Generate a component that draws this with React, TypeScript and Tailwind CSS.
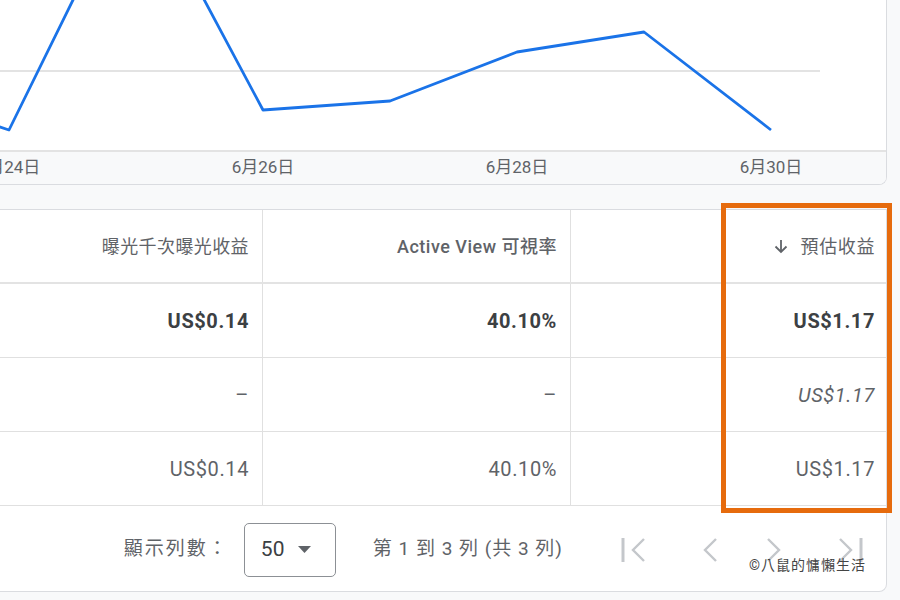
import React from 'react';

const FONT = "font-['Roboto','Noto_Sans_CJK_TC',sans-serif]";

// one point per day, 6/23 .. 6/30, spacing 127px
const points = [88, 130, -128, 110, 101, 52, 32, 130];
const dayLabels = ['6月24日', '6月26日', '6月28日', '6月30日'];

const linePath = points.map((y, i) => `${i === 0 ? 'M' : 'L'}${i * 127 - 118} ${y}`).join(' ');

type Row = { cpm: string; view: string; revenue: string; kind: 'total' | 'avg' | 'plain' };

const rows: Row[] = [
  { cpm: 'US$0.14', view: '40.10%', revenue: 'US$1.17', kind: 'total' },
  { cpm: '–', view: '–', revenue: 'US$1.17', kind: 'avg' },
  { cpm: 'US$0.14', view: '40.10%', revenue: 'US$1.17', kind: 'plain' },
];

const Chevron = ({ dir, bar }: { dir: 'left' | 'right'; bar?: boolean }) => (
  <svg width="26" height="28" viewBox="0 0 26 28" fill="none" stroke="#c4c7cb" strokeWidth="2.4">
    {dir === 'left' ? (
      <>
        {bar && <line x1="2" y1="2" x2="2" y2="26" strokeWidth="3" />}
        <polyline points="23,3 12,14 23,25" />
      </>
    ) : (
      <>
        <polyline points="3,3 14,14 3,25" />
        {bar && <line x1="24" y1="2" x2="24" y2="26" strokeWidth="3" />}
      </>
    )}
  </svg>
);

function Chart() {
  return (
    <div className="w-[887px] bg-white border-r border-b border-[#dadce0] rounded-br-lg overflow-hidden">
      <div className="h-[150px] relative">
        <svg width="886" height="150" className="block">
          <line x1="0" y1="71" x2="820" y2="71" stroke="#e3e3e3" strokeWidth="2" />
          <path d={linePath} fill="none" stroke="#1a73e8" strokeWidth="2.8" strokeLinejoin="round" />
        </svg>
      </div>
      <div className="h-[34px] relative border-t-2 border-[#e3e3e3] bg-[#f8f9fa]">
        {dayLabels.map((label, i) => (
          <span
            key={label}
            className="absolute top-[3px] -translate-x-1/2 text-[17px] text-[#5f6368] whitespace-nowrap"
            style={{ left: 9 + i * 254 }}
          >
            {label}
          </span>
        ))}
      </div>
    </div>
  );
}

function Table() {
  const cell = 'flex items-center justify-end pr-[13px] border-r border-[#e0e0e0]';
  return (
    <div className="w-[887px] bg-white border-t border-r border-b border-[#dadce0] rounded-br-lg relative">
      <div className="grid grid-cols-[263px_308px_151px_165px] h-[74px] border-b-2 border-[#e3e3e3] text-[18px] text-[#5f6368]">
        <div className={`${cell} tracking-[0.4px]`}>曝光千次曝光收益</div>
        <div className={`${cell} font-medium tracking-[0.5px]`}>Active View 可視率</div>
        <div className={cell}></div>
        <div className="flex items-center justify-end pr-[12px] gap-[12px] tracking-[0.6px]">
          <svg width="16" height="16" viewBox="0 0 16 16" fill="none" stroke="#5f6368" strokeWidth="1.8">
            <line x1="8" y1="2" x2="8" y2="14" />
            <polyline points="2.5,8.5 8,14 13.5,8.5" />
          </svg>
          預估收益
        </div>
      </div>
      {rows.map((r, i) => {
        const text = r.kind === 'total' ? 'font-bold text-[#3c4043]' : 'text-[#5f6368]';
        return (
          <div
            key={i}
            className={`grid grid-cols-[263px_308px_151px_165px] h-[74px] text-[20px] tracking-[0.6px] border-b border-[#e0e0e0] ${text}`}
          >
            <div className={cell}>{r.cpm}</div>
            <div className={cell}>{r.view}</div>
            <div className={cell}></div>
            <div className={`flex items-center justify-end pr-[12px] ${r.kind === 'avg' ? 'italic' : ''}`}>{r.revenue}</div>
          </div>
        );
      })}
      <div className="h-[85px] pt-[2px] flex items-center justify-end text-[#3c4043]">
        <span className="text-[19px] tracking-[2px] text-[#5f6368]">顯示列數：</span>
        <div className="ml-[15px] w-[92px] h-[54px] border border-[#8c9095] rounded-[5px] flex items-center pl-[16px] gap-[14px]">
          <span className="text-[21px] text-[#3c4043]">50</span>
          <svg width="13" height="7" viewBox="0 0 13 7">
            <polygon points="0,0 13,0 6.5,7" fill="#5f6368" />
          </svg>
        </div>
        <span className="ml-[37px] text-[19px] tracking-[1px] text-[#5f6368] whitespace-pre">第 1 到 3 列 (共 3 列)</span>
        <div className="ml-[35px] flex">
          <div className="w-[72px] flex justify-center"><Chevron dir="left" bar /></div>
          <div className="w-[72px] flex justify-center"><Chevron dir="left" /></div>
          <div className="w-[72px] flex justify-center"><Chevron dir="right" /></div>
          <div className="w-[72px] flex justify-center"><Chevron dir="right" bar /></div>
        </div>
      </div>
      <div className="absolute left-[721px] top-[-7px] w-[171px] h-[310px] border-[5px] border-[#e66b0d]"></div>
      <div className="absolute right-[20px] bottom-[15px] text-[14px] tracking-[1px] text-[#444]">©八鼠的慵懶生活</div>
    </div>
  );
}

export default function App() {
  return (
    <div className={`w-[900px] h-[600px] bg-[#f8f9fa] overflow-hidden ${FONT}`}>
      <Chart />
      <div className="mt-[24px]">
        <Table />
      </div>
    </div>
  );
}
